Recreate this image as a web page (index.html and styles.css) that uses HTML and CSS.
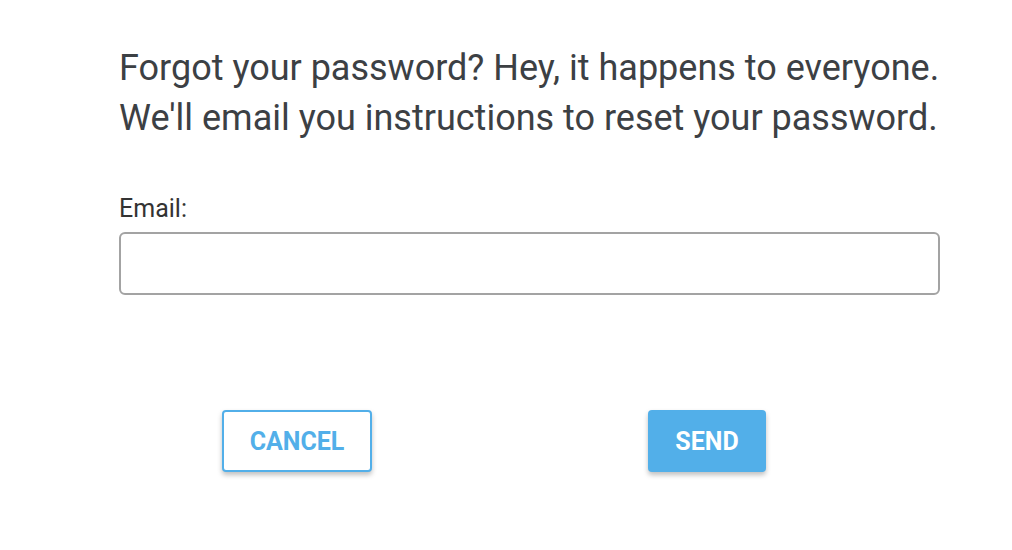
FILE: index.html
```html
<!DOCTYPE html>
<html>
<head>
<meta charset="utf-8">
<link rel="stylesheet" href="styles.css">
</head>
<body>
<div class="page">
  <div class="form">
    <p class="intro">Forgot your password? Hey, it happens to everyone.<br>We'll email you instructions to reset your password.</p>
    <label class="label" for="email">Email:</label>
    <input class="input" id="email" type="email">
  </div>
  <div class="actions">
    <div class="cell"><button class="btn btn-outline">Cancel</button></div>
    <div class="cell"><button class="btn btn-solid">Send</button></div>
  </div>
</div>
</body>
</html>
```
FILE: styles.css
```css
html, body {
  margin: 0;
  padding: 0;
  background: #fff;
}
body {
  font-family: Roboto, "Noto Sans", sans-serif;
  color: #3c4044;
}
.page {
  width: 1012px;
  height: 550px;
  box-sizing: border-box;
  padding-top: 43px;
}
.form {
  padding-left: 119px;
  width: 821px;
  display: flex;
  flex-direction: column;
}
.intro {
  margin: 0;
  font-size: 36px;
  line-height: 50px;
  white-space: nowrap;
}
.label {
  margin-top: 51px;
  font-size: 25px;
  line-height: 30px;
  color: #333;
}
.input {
  margin-top: 8px;
  height: 63px;
  box-sizing: border-box;
  border: 2px solid #a3a3a3;
  border-radius: 6px;
  font: inherit;
  outline: none;
}
.actions {
  display: flex;
  margin-top: 115px;
  padding-left: 92px;
}
.cell {
  width: 410px;
  display: flex;
  justify-content: center;
}
.btn {
  height: 62px;
  box-sizing: border-box;
  border-radius: 4px;
  font-family: Roboto, sans-serif;
  font-weight: 700;
  font-size: 25px;
  text-transform: uppercase;
  box-shadow: 0 3px 5px rgba(0,0,0,0.25);
  cursor: pointer;
}
.btn-outline {
  width: 150px;
  background: #fff;
  color: #52afe9;
  border: 2px solid #52afe9;
}
.btn-solid {
  width: 118px;
  background: #52afe9;
  color: #fff;
  border: none;
}
```
